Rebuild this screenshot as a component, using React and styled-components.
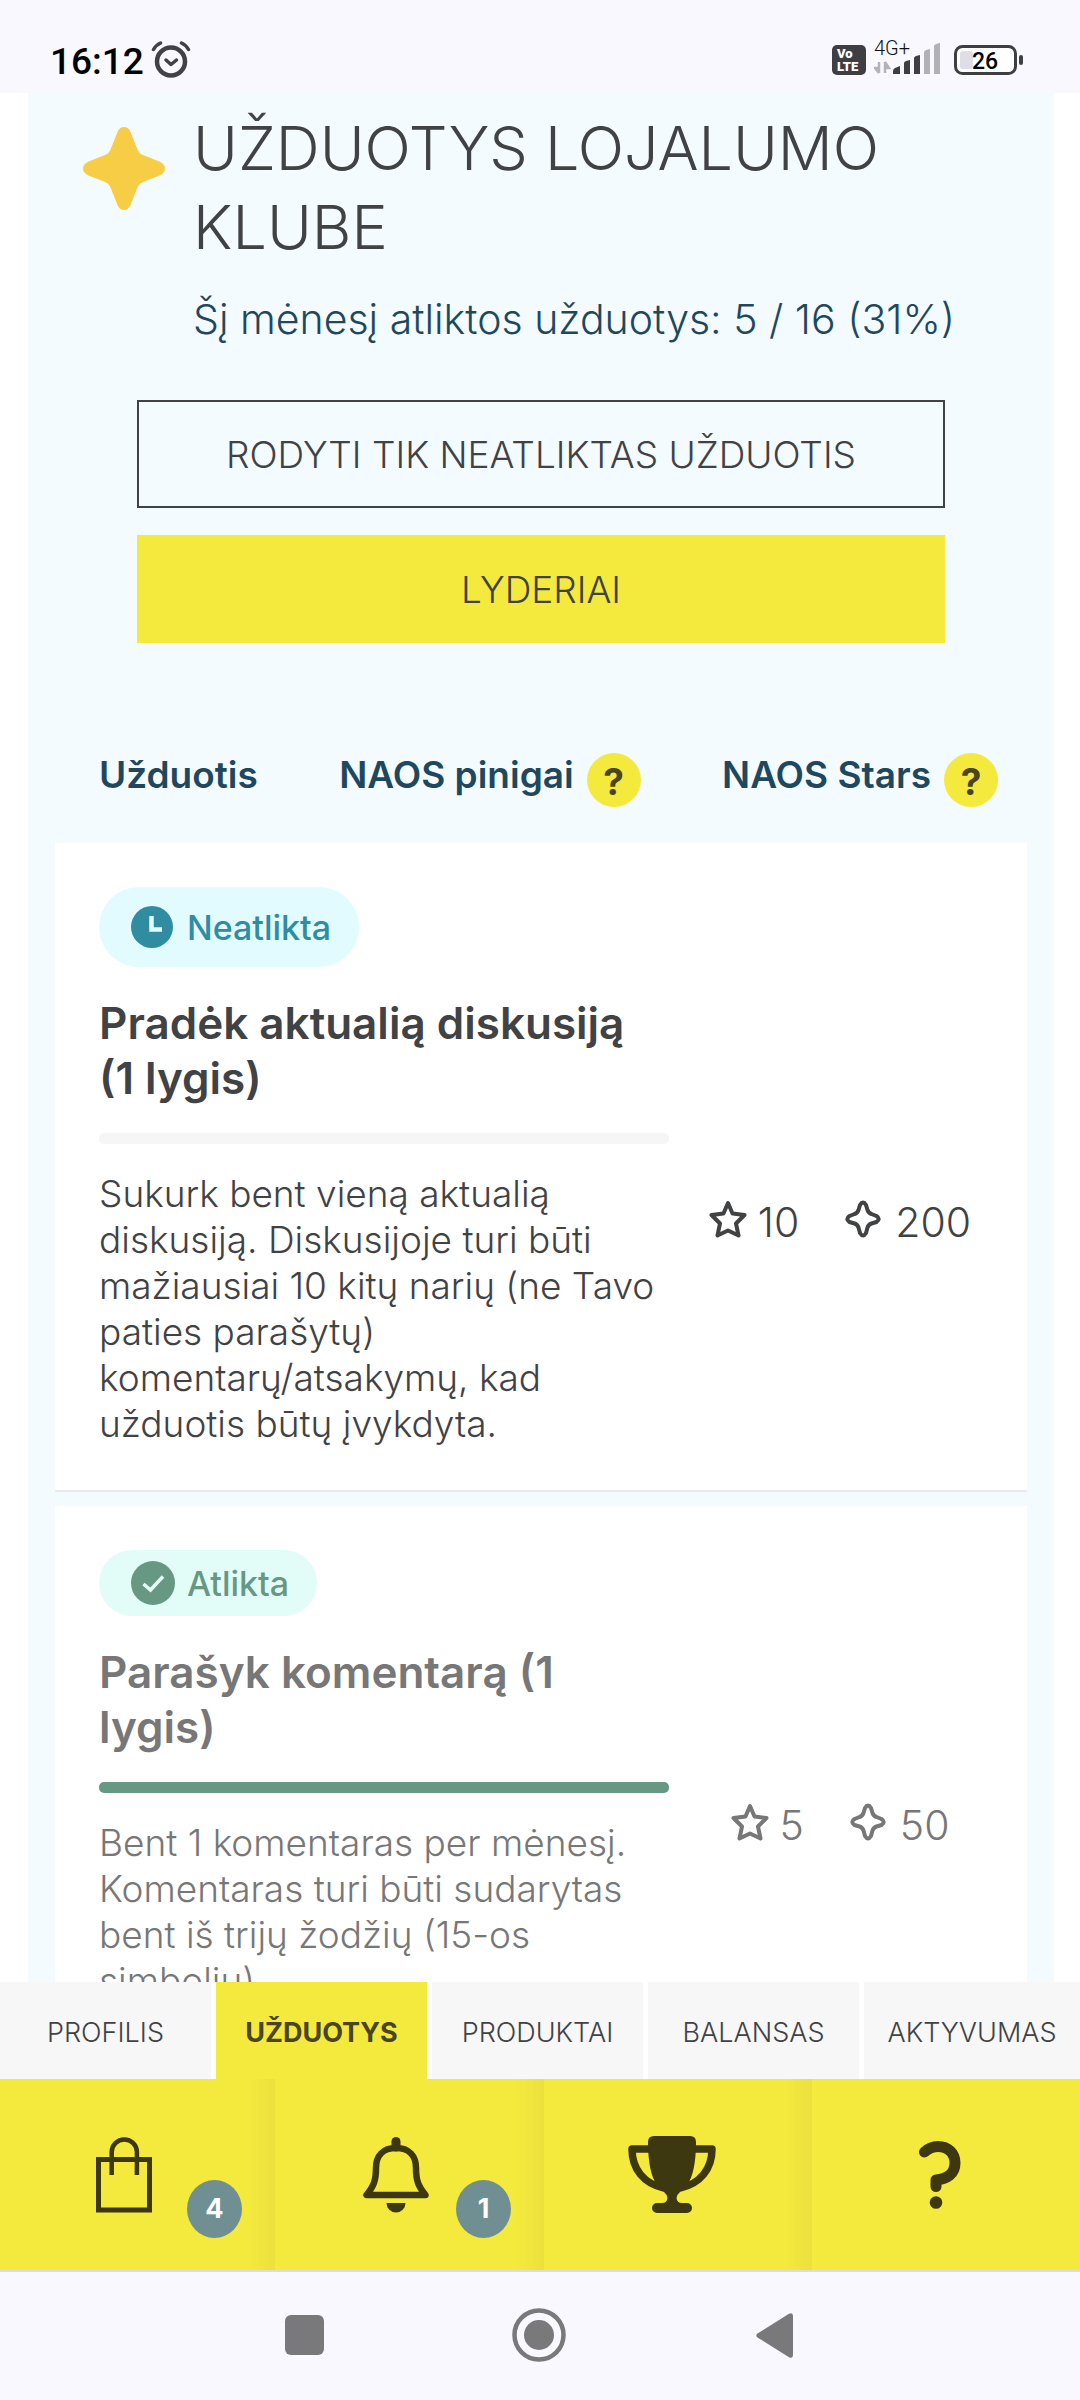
import React from 'react';
import styled, { createGlobalStyle } from 'styled-components';

const tasks = [
  {
    title: 'Pradėk aktualią diskusiją (1 lygis)',
    text: 'Sukurk bent vieną aktualią diskusiją. Diskusijoje turi būti mažiausiai 10 kitų narių (ne Tavo paties parašytų) komentarų/atsakymų, kad užduotis būtų įvykdyta.',
    progress: 0,
    stars: 10,
    money: 200,
    done: false,
  },
  {
    title: 'Parašyk komentarą (1 lygis)',
    text: 'Bent 1 komentaras per mėnesį. Komentaras turi būti sudarytas bent iš trijų žodžių (15-os simbolių)',
    progress: 100,
    stars: 5,
    money: 50,
    done: true,
  },
];

const tabs = ['Profilis', 'Užduotys', 'Produktai', 'Balansas', 'Aktyvumas'];

function AlarmIcon() {
  return (
    <svg width="40" height="37" viewBox="0 0 40 37" fill="none" stroke="#414147" strokeLinecap="round">
      <circle cx="20" cy="20.500" r="14" strokeWidth="4.500" />
      <path d="M2.500 8.500Q5 4 9.500 2M37.500 8.500Q35 4 30.500 2" strokeWidth="3.500" />
      <path d="M15 19l5 4.500 5.500-4.500" strokeWidth="3.500" strokeLinejoin="round" />
    </svg>
  );
}

function VolteIcon() {
  return (
    <svg width="34" height="30" viewBox="0 0 34 30" fontFamily="Roboto, sans-serif" fontWeight="900" fill="#fff">
      <rect width="34" height="30" rx="5" fill="#3e3f43" />
      <text x="5" y="13" fontSize="13">Vo</text>
      <text x="5" y="26" fontSize="13">LTE</text>
    </svg>
  );
}

function SignalIcon() {
  return (
    <svg width="68" height="38" viewBox="0 0 68 38">
      <text x="0" y="18" fontSize="20" fontFamily="Roboto, sans-serif" fill="#111">4G+</text>
      <path d="M5 25v11M5 36l-4-5h4M11 36V25M11 25l4 6h-4" stroke="#b4b3ba" strokeWidth="2.500" fill="#b4b3ba" />
      <path d="M19 37v-3q0-2 2-3l5-2v8zM30 37V26q0-1 2-2l4-1v14zM40 37V21q0-1 2-2l4-1v19z" fill="#3e3f43" />
      <path d="M50 37V15q0-1 2-2l4-1v25zM60 37V9q0-1 2-2l4-1v31z" fill="#b2b1b7" />
    </svg>
  );
}

function BatteryIcon() {
  return (
    <svg width="69" height="30" viewBox="0 0 69 30">
      <rect x="1.500" y="1.500" width="60" height="27" rx="7" fill="#fff" stroke="#3e3f43" strokeWidth="3" />
      <rect x="6" y="6" width="13" height="18" rx="3" fill="#dfdde6" />
      <rect x="65" y="10" width="4" height="10" rx="2" fill="#3e3f43" />
      <text x="31" y="24" textAnchor="middle" fontSize="23" fontWeight="500" fontFamily="Roboto, sans-serif">26</text>
    </svg>
  );
}

function SparkIcon() {
  return (
    <svg width="82" height="83" viewBox="0 0 82 83" fill="#f8cd46">
      <path d="M34.500 5Q36.500 0 41 0T47.500 5L54.500 22.500Q56 26.500 60 28L76.500 34.500Q82 37 82 41.500T76.500 48.500L60 55Q56 56.500 54.500 60.500L47.500 78Q45.500 83 41 83T34.500 78L27.500 60.500Q26 56.500 22 55L5.500 48.500Q0 46 0 41.500T5.500 34.500L22 28Q26 26.500 27.500 22.500Z" />
    </svg>
  );
}

function StarIcon() {
  return (
    <svg width="38" height="38" viewBox="0 0 38 38" fill="none" stroke="currentColor" strokeWidth="4" strokeLinejoin="round">
      <path d="M19 3l4.500 10.500L35.500 15l-8.500 8.500 2.500 12L19 30.500 8.500 35.500l2.500-12L2.500 15l12-1.500z" />
    </svg>
  );
}

function MoneyIcon() {
  return (
    <svg width="36" height="38" viewBox="0 0 36 38" fill="none" stroke="currentColor" strokeWidth="4" strokeLinejoin="round">
      <path d="M15 5Q18 0 21 5L22.500 10Q23.500 13 26.500 14L31.500 16Q36 19 31.500 22L26.500 23.500Q23.500 24.500 22.500 27.500L21 33Q18 38 15 33L13.500 27.500Q12.500 24.500 9.500 23.500L4.500 22Q0 19 4.500 16L9.500 14Q12.500 13 13.500 10Z" />
    </svg>
  );
}

function ClockIcon() {
  return (
    <svg width="42" height="42" viewBox="0 0 42 42">
      <circle cx="21" cy="21" r="21" fill="#308da1" />
      <path d="M20.500 10v13.500H31" fill="none" stroke="#e2fbff" strokeWidth="4.500" />
    </svg>
  );
}

function CheckIcon() {
  return (
    <svg width="44" height="44" viewBox="0 0 44 44">
      <circle cx="22" cy="22" r="22" fill="#679884" />
      <path d="M12.500 23l7 6L32 15.500" fill="none" stroke="#e2fdf8" strokeWidth="3.500" />
    </svg>
  );
}

function BagIcon() {
  return (
    <svg width="56" height="76" viewBox="0 0 56 76" fill="none" stroke="currentColor">
      <rect x="2.500" y="22.500" width="51" height="50.500" strokeWidth="5" />
      <path d="M15.700 38V15a12.600 12.600 0 0 1 25.200 0V38" strokeWidth="4.500" />
    </svg>
  );
}

function BellIcon() {
  return (
    <svg width="66" height="76" viewBox="0 0 66 76" fill="none" stroke="currentColor" strokeLinecap="round" strokeLinejoin="round">
      <path d="M33 11C20 11 13 19 13 31C13 43 11 49 3.500 58H62.500C55 49 53 43 53 31C53 19 46 11 33 11Z" strokeWidth="6.500" />
      <path d="M33 4.500V10" strokeWidth="9" />
      <path d="M23.500 66H42.500a9.500 9.500 0 0 1-19 0z" fill="currentColor" stroke="none" />
    </svg>
  );
}

function TrophyIcon() {
  return (
    <svg width="88" height="77" viewBox="0 0 88 77" fill="currentColor">
      <path d="M26 0H62Q68 0 68 6C68 26 65 41 59 49Q57 53 52 56Q48.500 59 48.500 62Q49 67 54 67H59a5 5 0 0 1 0 10H29a5 5 0 0 1 0-10H34Q39 67 39.500 62Q39.500 59 36 56Q31 53 29 49C23 41 20 26 20 6Q20 0 26 0Z" />
      <path d="M22 13H4C4 33 16 48 36 52M66 13H84C84 33 72 48 52 52" fill="none" stroke="currentColor" strokeWidth="7.500" strokeLinejoin="round" />
    </svg>
  );
}

function HelpIcon() {
  return (
    <svg width="42" height="68" viewBox="0 0 42 68" fill="none" stroke="currentColor" strokeWidth="11" strokeLinecap="round" strokeLinejoin="round">
      <path d="M5.500 11C10 7 14 5.500 19 5.500C29 5.500 36 12 36 22C36 33 28 38 17 39V45.500" />
      <circle cx="17" cy="61.500" r="6.300" fill="currentColor" stroke="none" />
    </svg>
  );
}

function Task({ task }) {
  return (
    <Card $done={task.done}>
      <Status $done={task.done}>
        {task.done ? <CheckIcon /> : <ClockIcon />}
        {task.done ? 'Atlikta' : 'Neatlikta'}
      </Status>
      <CardBody>
        <div>
          <CardTitle>{task.title}</CardTitle>
          <Progress role="progressbar" aria-label={task.title} aria-valuenow={task.progress}>
            <span style={{ width: `${task.progress}%` }} />
          </Progress>
          <CardText>{task.text}</CardText>
        </div>
        <Points>
          <Point $gap={11}><StarIcon />{task.stars}</Point>
          <Point $gap={14}><MoneyIcon />{task.money}</Point>
        </Points>
      </CardBody>
    </Card>
  );
}

export default function App() {
  return (
    <Screen>
      <GlobalStyle />
      <StatusBar>
        <Clock>16:12</Clock>
        <AlarmIcon />
        <StatusIcons>
          <VolteIcon />
          <SignalIcon />
          <BatteryIcon />
        </StatusIcons>
      </StatusBar>
      <Content>
        <Panel>
          <Intro>
            <SparkIcon />
            <div>
              <h1>Užduotys lojalumo klube</h1>
              <p>Šį mėnesį atliktos užduotys: 5 / 16 (31%)</p>
            </div>
          </Intro>
          <Actions>
            <ActionButton type="button">Rodyti tik neatliktas užduotis</ActionButton>
            <ActionButton type="button" $filled>Lyderiai</ActionButton>
          </Actions>
          <ListHead>
            <span>Užduotis</span>
            <span>NAOS pinigai <Hint type="button">?</Hint></span>
            <span>NAOS Stars <Hint type="button">?</Hint></span>
          </ListHead>
          <TaskList>
            {tasks.map((task) => <Task key={task.title} task={task} />)}
          </TaskList>
        </Panel>
      </Content>
      <Tabs>
        {tabs.map((tab, index) => (
          <Tab href="#" key={tab} $active={index === 1}>{tab}</Tab>
        ))}
      </Tabs>
      <Menu>
        <MenuItem href="#" aria-label="Krepšelis" $shift={27}><BagIcon /><Count>4</Count></MenuItem>
        <MenuItem href="#" aria-label="Pranešimai" $shift={27}><BellIcon /><Count>1</Count></MenuItem>
        <MenuItem href="#" aria-label="Lyderiai" $shift={13}><TrophyIcon /></MenuItem>
        <MenuItem href="#" aria-label="Pagalba" $shift={13}><HelpIcon /></MenuItem>
      </Menu>
      <SystemNav>
        <button type="button" aria-label="Programos">
          <svg width="39" height="40" viewBox="0 0 39 40"><rect width="39" height="40" rx="6" /></svg>
        </button>
        <button type="button" aria-label="Pradžia">
          <svg width="54" height="54" viewBox="0 0 54 54">
            <circle cx="27" cy="27" r="24.500" fill="none" stroke="#79797c" strokeWidth="4.500" />
            <circle cx="27" cy="27" r="15" />
          </svg>
        </button>
        <button type="button" aria-label="Atgal">
          <svg width="37" height="45" viewBox="0 0 37 45">
            <path d="M1.500 20.500L33 .800Q37-1 37 3V42Q37 46 33 44.200L1.500 24.500Q-1 22.500 1.500 20.500Z" />
          </svg>
        </button>
      </SystemNav>
    </Screen>
  );
}

const GlobalStyle = createGlobalStyle`
  * {
    box-sizing: border-box;
    margin: 0;
  }
  body {
    font-family: Inter, sans-serif;
    font-weight: 300;
    color: #414244;
    background: #fff;
  }
  svg {
    flex: none;
  }
  button {
    font: inherit;
    color: inherit;
    border: none;
    padding: 0;
    cursor: pointer;
  }
`;

const Screen = styled.div`
  height: 100vh;
  display: flex;
  flex-direction: column;
`;

const StatusBar = styled.header`
  flex: none;
  height: 93px;
  padding: 0 57px 15px 50px;
  display: flex;
  align-items: flex-end;
  gap: 7px;
  background: #f9f8ff;
`;

const Clock = styled.time`
  font: 500 37px/32px Roboto, sans-serif;
  color: #000;
`;

const StatusIcons = styled.div`
  margin-left: auto;
  display: flex;
  align-items: flex-end;
  gap: 12px;
  padding-bottom: 3px;
  svg:nth-child(1) {
    margin-right: -4px;
  }
`;

const Content = styled.main`
  flex: 1;
  min-height: 0;
  overflow: hidden;
  padding: 0 26px 0 28px;
`;

const Panel = styled.section`
  background: #f3fbff;
  padding: 16px 27px;
`;

const Intro = styled.div`
  display: flex;
  align-items: flex-start;
  gap: 28px;
  padding-left: 28px;
  > svg {
    margin-top: 18px;
  }
  h1 {
    font-size: 61px;
    line-height: 79px;
    font-weight: 300;
    text-transform: uppercase;
  }
  p {
    margin-top: 27px;
    font-size: 41px;
    line-height: 50px;
    color: #1f485e;
  }
`;

const Actions = styled.div`
  display: flex;
  flex-direction: column;
  gap: 27px;
  padding: 56px 82px 0;
`;

const ActionButton = styled.button`
  height: 108px;
  font-size: 37px;
  text-transform: uppercase;
  background: ${(props) => (props.$filled ? '#f4ea3d' : 'transparent')};
  && {
    border: 2px solid ${(props) => (props.$filled ? '#f4ea3d' : '#414244')};
  }
`;

const ListHead = styled.div`
  display: flex;
  justify-content: space-between;
  align-items: flex-start;
  padding: 110px 29px 36px 44px;
  font-size: 37px;
  line-height: 44px;
  font-weight: 600;
  color: #1f485e;
  > span {
    display: flex;
    gap: 13px;
  }
`;

const Hint = styled.button`
  width: 54px;
  height: 54px;
  border-radius: 50%;
  background: #f4ea3d;
  && {
    color: #4a4520;
    font-weight: 700;
    padding-top: 4px;
  }
`;

const TaskList = styled.div`
  display: flex;
  flex-direction: column;
  gap: 14px;
`;

const Card = styled.article`
  background: #fff;
  border-bottom: 2px solid #e6eaec;
  padding: 44px 16px 43px 44px;
  color: ${(props) => (props.$done ? '#777' : '#414244')};
`;

const Status = styled.div`
  display: inline-flex;
  align-items: center;
  gap: ${(props) => (props.$done ? 12 : 14)}px;
  height: ${(props) => (props.$done ? 66 : 80)}px;
  padding: 0 28px 0 32px;
  border-radius: 40px;
  font-size: 34px;
  font-weight: 500;
  vertical-align: top;
  color: ${(props) => (props.$done ? '#679884' : '#308da1')};
  background: ${(props) => (props.$done ? '#e2fdf8' : '#e2fbff')};
`;

const CardBody = styled.div`
  display: grid;
  grid-template-columns: 5fr 3fr;
  align-items: center;
  padding-top: 29px;
`;

const CardTitle = styled.h2`
  font-size: 44px;
  line-height: 55px;
  font-weight: 600;
`;

const Progress = styled.div`
  height: 11px;
  margin: 27px 0;
  border-radius: 5px;
  background: #f6f6f6;
  overflow: hidden;
  span {
    display: block;
    height: 100%;
    background: #679884;
  }
`;

const CardText = styled.p`
  font-size: 37px;
  line-height: 46px;
`;

const Points = styled.div`
  display: flex;
  justify-content: center;
  gap: 46px;
`;

const Point = styled.div`
  display: flex;
  align-items: center;
  gap: ${(props) => props.$gap}px;
  font-size: 41px;
  line-height: 50px;
  svg {
    margin-bottom: 6px;
  }
`;

const Tabs = styled.nav`
  flex: none;
  display: grid;
  grid-template-columns: repeat(5, 1fr);
`;

const Tab = styled.a`
  height: 97px;
  padding-top: 4px;
  display: flex;
  align-items: center;
  justify-content: center;
  border-right: 5px solid #fff;
  font-size: 27px;
  text-transform: uppercase;
  text-decoration: none;
  color: ${(props) => (props.$active ? '#4a4520' : '#414244')};
  font-weight: ${(props) => (props.$active ? 700 : 300)};
  background: ${(props) => (props.$active ? '#f4ea3d' : '#f7f7f7')};
  &:last-child {
    border-right: none;
  }
`;

const Menu = styled.nav`
  flex: none;
  display: grid;
  grid-template-columns: 275fr 269fr 268fr 268fr;
  border-bottom: 2px solid #dddde0;
`;

const MenuItem = styled.a`
  position: relative;
  height: 191px;
  display: flex;
  align-items: center;
  justify-content: center;
  padding-right: ${(props) => props.$shift}px;
  color: #3d380f;
  background: linear-gradient(to left, #ece03d, #f4ea3d 28px);
  &:last-child {
    background: #f4ea3d;
  }
`;

const Count = styled.span`
  position: absolute;
  right: 33px;
  bottom: 32px;
  width: 55px;
  height: 58px;
  border-radius: 50%;
  background: #6f8f92;
  color: #fff;
  font-size: 27px;
  line-height: 58px;
  font-weight: 700;
  text-align: center;
`;

const SystemNav = styled.footer`
  flex: none;
  height: 128px;
  padding: 0 2px 2px 0;
  display: flex;
  justify-content: center;
  background: #f9f8ff;
  button {
    width: 235px;
    display: flex;
    align-items: center;
    justify-content: center;
    background: none;
    fill: #79797c;
  }
`;
